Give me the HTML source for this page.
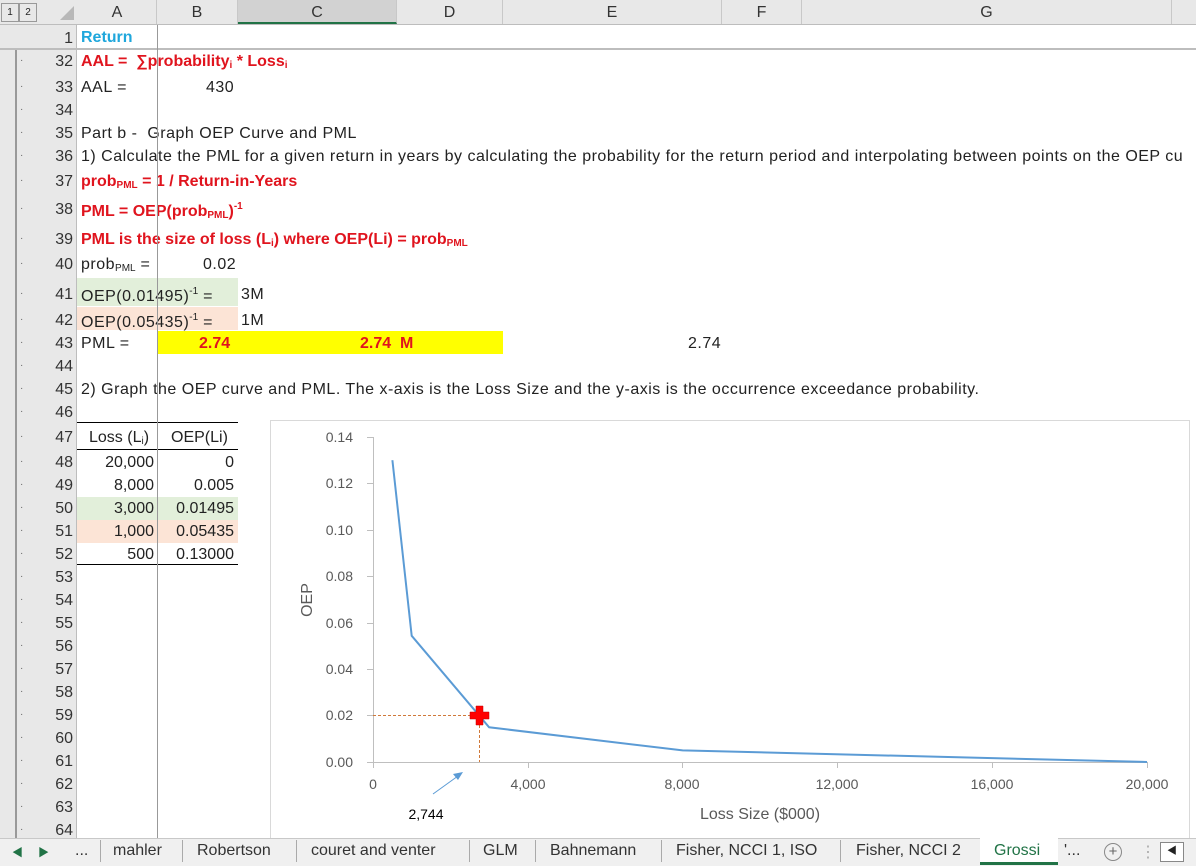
<!DOCTYPE html>
<html><head><meta charset="utf-8"><style>
body{margin:0;width:1196px;height:865px;overflow:hidden;background:#fff;font-family:"Liberation Sans","Noto Sans CJK SC",sans-serif;font-size:16px;color:#222;position:relative}
.a{position:absolute;white-space:nowrap}
.t{letter-spacing:0.5px}
.rn{position:absolute;left:48px;width:25px;text-align:right;font-size:16px;color:#333;line-height:23px}
.dot{position:absolute;left:20px;font-size:10px;color:#666}
.r{color:#e0141e;font-weight:bold}
.ch{position:absolute;top:0;height:24px;line-height:25px;text-align:center;border-right:1px solid #c8c8c8;color:#333;font-size:16px}
sub{font-size:10px;vertical-align:-2px;letter-spacing:0}
sup{font-size:10px;vertical-align:7px;letter-spacing:0}
.tb{position:absolute;top:840px;line-height:22px;font-size:16px;color:#333}
.sep{position:absolute;top:840px;width:1px;height:22px;background:#aaa}
</style></head><body>
<div class="a" style="left:0;top:0;width:1196px;height:24px;background:#e8e8e8;border-bottom:1px solid #bdbdbd"></div>
<div class="a" style="left:0;top:25px;width:76px;height:813px;background:#e8e8e8"></div>
<div class="a" style="left:76px;top:25px;width:1px;height:813px;background:#bdbdbd"></div>
<div class="a" style="left:15px;top:48px;width:2px;height:790px;background:#999"></div>
<div class="a" style="left:0;top:48px;width:1196px;height:2px;background:#bdbdbd"></div>
<div class="a" style="left:1px;top:3px;width:16px;height:17px;border:1px solid #999;font-size:10px;text-align:center;line-height:17px">1</div>
<div class="a" style="left:19px;top:3px;width:16px;height:17px;border:1px solid #999;font-size:10px;text-align:center;line-height:17px">2</div>
<div class="a" style="left:60px;top:6px;width:0;height:0;border-left:14px solid transparent;border-bottom:14px solid #b8b8b8"></div>
<div class="ch" style="left:78px;width:78px">A</div>
<div class="ch" style="left:157px;width:80px">B</div>
<div class="ch" style="left:238px;width:158px;background:#d2d2d2;border-bottom:2px solid #217346;height:22px">C</div>
<div class="ch" style="left:397px;width:105px">D</div>
<div class="ch" style="left:503px;width:218px">E</div>
<div class="ch" style="left:722px;width:79px">F</div>
<div class="ch" style="left:802px;width:369px">G</div>
<div class="a" style="left:157px;top:25px;width:1px;height:813px;background:#999;z-index:5"></div>

<div class="rn" style="top:27px">1</div>
<div class="rn" style="top:50px">32</div><div class="dot" style="top:55px">·</div>
<div class="rn" style="top:76px">33</div><div class="dot" style="top:81px">·</div>
<div class="rn" style="top:99px">34</div><div class="dot" style="top:104px">·</div>
<div class="rn" style="top:122px">35</div><div class="dot" style="top:127px">·</div>
<div class="rn" style="top:145px">36</div><div class="dot" style="top:150px">·</div>
<div class="rn" style="top:170px">37</div><div class="dot" style="top:175px">·</div>
<div class="rn" style="top:198px">38</div><div class="dot" style="top:203px">·</div>
<div class="rn" style="top:228px">39</div><div class="dot" style="top:233px">·</div>
<div class="rn" style="top:253px">40</div><div class="dot" style="top:258px">·</div>
<div class="rn" style="top:283px">41</div><div class="dot" style="top:288px">·</div>
<div class="rn" style="top:309px">42</div><div class="dot" style="top:314px">·</div>
<div class="rn" style="top:332px">43</div><div class="dot" style="top:337px">·</div>
<div class="rn" style="top:355px">44</div><div class="dot" style="top:360px">·</div>
<div class="rn" style="top:378px">45</div><div class="dot" style="top:383px">·</div>
<div class="rn" style="top:401px">46</div><div class="dot" style="top:406px">·</div>
<div class="rn" style="top:426px">47</div><div class="dot" style="top:431px">·</div>
<div class="rn" style="top:451px">48</div><div class="dot" style="top:456px">·</div>
<div class="rn" style="top:474px">49</div><div class="dot" style="top:479px">·</div>
<div class="rn" style="top:497px">50</div><div class="dot" style="top:502px">·</div>
<div class="rn" style="top:520px">51</div><div class="dot" style="top:525px">·</div>
<div class="rn" style="top:543px">52</div><div class="dot" style="top:548px">·</div>
<div class="rn" style="top:566px">53</div><div class="dot" style="top:571px">·</div>
<div class="rn" style="top:589px">54</div><div class="dot" style="top:594px">·</div>
<div class="rn" style="top:612px">55</div><div class="dot" style="top:617px">·</div>
<div class="rn" style="top:635px">56</div><div class="dot" style="top:640px">·</div>
<div class="rn" style="top:658px">57</div><div class="dot" style="top:663px">·</div>
<div class="rn" style="top:681px">58</div><div class="dot" style="top:686px">·</div>
<div class="rn" style="top:704px">59</div><div class="dot" style="top:709px">·</div>
<div class="rn" style="top:727px">60</div><div class="dot" style="top:732px">·</div>
<div class="rn" style="top:750px">61</div><div class="dot" style="top:755px">·</div>
<div class="rn" style="top:773px">62</div><div class="dot" style="top:778px">·</div>
<div class="rn" style="top:796px">63</div><div class="dot" style="top:801px">·</div>
<div class="rn" style="top:819px">64</div><div class="dot" style="top:824px">·</div>

<div class="a" style="left:77px;top:278px;width:161px;height:28px;background:#e2efda"></div>
<div class="a" style="left:77px;top:307px;width:161px;height:23px;background:#fce4d6"></div>
<div class="a" style="left:157px;top:331px;width:346px;height:23px;background:#ffff00"></div>
<div class="a" style="left:77px;top:497px;width:161px;height:23px;background:#e2efda"></div>
<div class="a" style="left:77px;top:520px;width:161px;height:23px;background:#fce4d6"></div>

<div class="a" style="left:81px;top:29px;color:#1fa7dc;font-weight:bold">Return</div>
<div class="a r" style="left:81px;top:53px">AAL = &nbsp;∑probability<sub>i</sub> * Loss<sub>i</sub></div>
<div class="a t" style="left:81px;top:79px">AAL =</div>
<div class="a t" style="left:206px;top:79px">430</div>
<div class="a t" style="left:81px;top:125px">Part b - &nbsp;Graph OEP Curve and PML</div>
<div class="a t" style="left:81px;top:148px">1) Calculate the PML for a given return in years by calculating the probability for the return period and interpolating between points on the OEP cu</div>
<div class="a r" style="left:81px;top:173px">prob<sub>PML</sub> = 1 / Return-in-Years</div>
<div class="a r" style="left:81px;top:201px">PML = OEP(prob<sub>PML</sub>)<sup>-1</sup></div>
<div class="a r" style="left:81px;top:231px">PML is the size of loss (L<sub>i</sub>) where OEP(Li) = prob<sub>PML</sub></div>
<div class="a t" style="left:81px;top:256px">prob<sub>PML</sub> =</div>
<div class="a t" style="left:203px;top:256px">0.02</div>
<div class="a t" style="left:81px;top:286px">OEP(0.01495)<sup>-1</sup> =</div>
<div class="a t" style="left:241px;top:286px">3M</div>
<div class="a t" style="left:81px;top:312px">OEP(0.05435)<sup>-1</sup> =</div>
<div class="a t" style="left:241px;top:312px">1M</div>
<div class="a t" style="left:81px;top:335px">PML =</div>
<div class="a r" style="left:199px;top:335px">2.74</div>
<div class="a r" style="left:360px;top:335px">2.74 &nbsp;M</div>
<div class="a t" style="left:688px;top:335px">2.74</div>
<div class="a t" style="left:81px;top:381px">2) Graph the OEP curve and PML. The x-axis is the Loss Size and the y-axis is the occurrence exceedance probability.</div>

<div class="a" style="left:77px;top:422px;width:161px;height:1px;background:#000"></div>
<div class="a" style="left:77px;top:449px;width:161px;height:1px;background:#000"></div>
<div class="a" style="left:77px;top:564px;width:161px;height:1px;background:#000"></div>
<div class="a" style="left:89px;top:429px">Loss (L<sub>i</sub>)</div>
<div class="a" style="left:171px;top:429px">OEP(Li)</div>
<div class="a" style="right:1042px;top:454px">20,000</div><div class="a" style="right:962px;top:454px">0</div>
<div class="a" style="right:1042px;top:477px">8,000</div><div class="a" style="right:962px;top:477px">0.005</div>
<div class="a" style="right:1042px;top:500px">3,000</div><div class="a" style="right:962px;top:500px">0.01495</div>
<div class="a" style="right:1042px;top:523px">1,000</div><div class="a" style="right:962px;top:523px">0.05435</div>
<div class="a" style="right:1042px;top:546px">500</div><div class="a" style="right:962px;top:546px">0.13000</div>

<svg class="a" style="left:0;top:0" width="1196" height="865" font-family="Liberation Sans, sans-serif">
<rect x="270.5" y="420.5" width="919" height="420" fill="#fff" stroke="#d9d9d9"/>
<g stroke="#bfbfbf" stroke-width="1">
<line x1="373.5" y1="437" x2="373.5" y2="762"/>
<line x1="373" y1="762.5" x2="1147" y2="762.5"/>
<line x1="367" y1="437.5" x2="373" y2="437.5"/><line x1="367" y1="483.5" x2="373" y2="483.5"/>
<line x1="367" y1="530.5" x2="373" y2="530.5"/><line x1="367" y1="576.5" x2="373" y2="576.5"/>
<line x1="367" y1="623.5" x2="373" y2="623.5"/><line x1="367" y1="669.5" x2="373" y2="669.5"/>
<line x1="367" y1="715.5" x2="373" y2="715.5"/><line x1="367" y1="762.5" x2="373" y2="762.5"/>
<line x1="373.5" y1="762" x2="373.5" y2="768"/><line x1="528.5" y1="762" x2="528.5" y2="768"/>
<line x1="682.5" y1="762" x2="682.5" y2="768"/><line x1="837.5" y1="762" x2="837.5" y2="768"/>
<line x1="992.5" y1="762" x2="992.5" y2="768"/><line x1="1147.5" y1="762" x2="1147.5" y2="768"/>
</g>
<g font-size="14" fill="#595959" text-anchor="end">
<text x="353" y="442">0.14</text><text x="353" y="488">0.12</text><text x="353" y="535">0.10</text>
<text x="353" y="581">0.08</text><text x="353" y="628">0.06</text><text x="353" y="674">0.04</text>
<text x="353" y="720">0.02</text><text x="353" y="767">0.00</text>
</g>
<g font-size="14" fill="#595959" text-anchor="middle">
<text x="373" y="789">0</text><text x="528" y="789">4,000</text><text x="682" y="789">8,000</text>
<text x="837" y="789">12,000</text><text x="992" y="789">16,000</text><text x="1147" y="789">20,000</text>
</g>
<text x="760" y="819" font-size="16" fill="#595959" text-anchor="middle">Loss Size ($000)</text>
<text transform="translate(312,600) rotate(-90)" font-size="16" fill="#595959" text-anchor="middle">OEP</text>
<line x1="373" y1="715.5" x2="479" y2="715.5" stroke="#d0793a" stroke-dasharray="3,2" stroke-width="1"/>
<line x1="479.5" y1="715" x2="479.5" y2="762" stroke="#d0793a" stroke-dasharray="3,2" stroke-width="1"/>
<polyline points="392.4,460.2 411.7,635.8 489.1,727.3 682.6,750.4 1147,762" fill="none" stroke="#5b9bd5" stroke-width="2"/>
<path d="M476 706h7v6h6v7h-6v6h-7v-6h-6v-7h6z" fill="#ff0000" stroke="#c00000" stroke-width="0.5"/>
<line x1="433" y1="794" x2="458" y2="776" stroke="#5b9bd5" stroke-width="1"/>
<path d="M463 772l-10 2 5 6z" fill="#5b9bd5"/>
<text x="426" y="819" font-size="14" fill="#000" text-anchor="middle">2,744</text>
</svg>

<div class="a" style="left:0;top:838px;width:1196px;height:27px;background:#f0f0f0;border-top:1px solid #c8c8c8"></div>
<div class="a" style="left:12px;top:844px;font-size:11px;color:#217346">◀</div>
<div class="a" style="left:38px;top:844px;font-size:11px;color:#217346">▶</div>
<div class="tb" style="left:75px">...</div>
<div class="sep" style="left:100px"></div>
<div class="tb" style="left:113px">mahler</div>
<div class="sep" style="left:182px"></div>
<div class="tb" style="left:197px">Robertson</div>
<div class="sep" style="left:296px"></div>
<div class="tb" style="left:311px">couret and venter</div>
<div class="sep" style="left:469px"></div>
<div class="tb" style="left:483px">GLM</div>
<div class="sep" style="left:535px"></div>
<div class="tb" style="left:550px">Bahnemann</div>
<div class="sep" style="left:661px"></div>
<div class="tb" style="left:676px">Fisher, NCCI 1, ISO</div>
<div class="sep" style="left:840px"></div>
<div class="tb" style="left:856px">Fisher, NCCI 2</div>
<div class="a" style="left:980px;top:838px;width:78px;height:24px;background:#fff;border-bottom:3px solid #217346"></div>
<div class="tb" style="left:994px;color:#217346">Grossi</div>
<div class="tb" style="left:1064px">'...</div>
<div class="a" style="left:1104px;top:843px;width:16px;height:16px;border:1px solid #888;border-radius:50%;text-align:center;line-height:16px;font-size:15px;color:#666">+</div>
<div class="a" style="left:1140px;top:842px;color:#aaa">⋮</div>
<div class="a" style="left:1160px;top:842px;width:22px;height:18px;border:1px solid #888;background:#fff;font-size:10px;line-height:18px;text-align:center">◀</div>
</body></html>
